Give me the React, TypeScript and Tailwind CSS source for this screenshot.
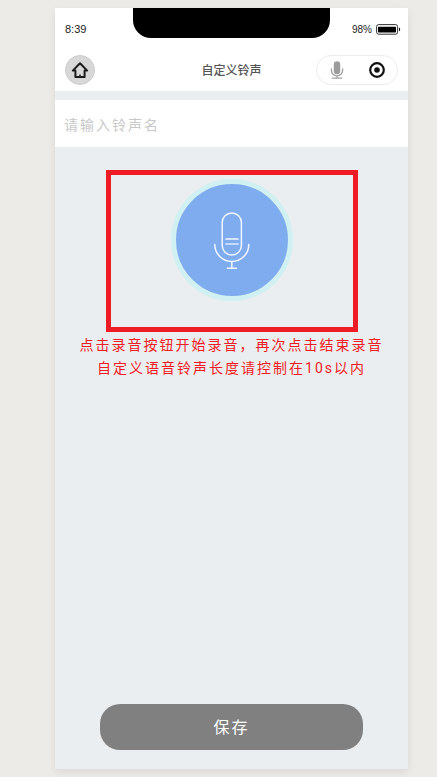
import { useState } from "react";

function HomeIcon() {
  return (
    <svg viewBox="0 0 18 18" className="size-[18px]" fill="none" stroke="#1c1c1c" strokeWidth="2" strokeLinejoin="round" strokeLinecap="round" aria-hidden="true">
      <path d="M9 2.2 L1.8 9.6 H4.4 V16 H13.6 V9.6 H16.2 Z" />
      <path d="M9 14 V15.5" strokeWidth="1.4" />
    </svg>
  );
}

function SmallMicIcon() {
  return (
    <svg viewBox="0 0 14 18" className="h-[18px] w-3.5" fill="none" stroke="#a0a0a0" strokeWidth="1.3" strokeLinecap="round" aria-hidden="true">
      <rect x="3.8" y="0.2" width="6.4" height="13" rx="3" fill="#9c9c9c" stroke="none" />
      <path d="M1.4 8 V9.4 A5.6 5.4 0 0 0 12.6 9.4 V8 M7 14.8 V17 M2.4 17.2 H11.6" />
    </svg>
  );
}

function TargetIcon() {
  return (
    <svg viewBox="0 0 16 16" className="size-4" aria-hidden="true">
      <circle cx="8" cy="8" r="6.8" fill="none" stroke="#111" strokeWidth="2.2" />
      <circle cx="8" cy="8" r="2.8" fill="#111" />
    </svg>
  );
}

function BatteryIcon() {
  return (
    <svg viewBox="0 0 25 11" className="h-[11px] w-[25px]" aria-hidden="true">
      <rect x="0.6" y="0.6" width="21" height="9.6" rx="2" fill="#fff" stroke="#333" strokeWidth="1" />
      <rect x="2" y="2.8" width="18" height="5.6" rx="0.6" fill="#000" />
      <path d="M23 3.6 C24.6 4 24.6 6.8 23 7.2 Z" fill="#000" />
    </svg>
  );
}

function RecordMicIcon() {
  return (
    <svg viewBox="0 0 36 58" className="h-[58px] w-9" fill="none" stroke="#f1f7ff" strokeWidth="1.5" strokeLinecap="round" aria-hidden="true">
      <rect x="8.2" y="2" width="19.2" height="42" rx="9.6" />
      <path d="M12 28 H24" />
      <path d="M12 33 H24" stroke="#c6dbf8" strokeWidth="1.8" />
      <path d="M0.8 33.4 A17 17 0 0 0 34.8 33.4 M17.8 50.4 V57.2 M13.4 57.2 H22.4" />
    </svg>
  );
}

export default function App() {
  const [name, setName] = useState("");
  const [recording, setRecording] = useState(false);

  return (
    <div className="flex min-h-screen bg-[#ecebe7] py-2 pr-[29px] pl-[55px] font-['Liberation_Sans','Noto_Sans_CJK_SC',sans-serif]">
      <main className="flex flex-1 flex-col bg-[#eaeef1] shadow-[0_3px_8px_rgba(0,0,0,0.08)]">
        <header className="bg-white">
          <div className="grid grid-cols-[1fr_197px_1fr]">
            <time className="pt-[13px] pl-2.5 text-[11px] leading-4 text-[#222]">8:39</time>
            <div className="h-[30px] rounded-b-[18px] bg-black" />
            <div className="flex items-center justify-end gap-1 pt-[13px] pr-[7px] text-[10px] leading-4 text-[#222]">
              <span>98%</span>
              <BatteryIcon />
            </div>
          </div>
          <div className="mt-[17px] grid grid-cols-[1fr_auto_1fr] items-center px-2.5 pb-1.5">
            <button type="button" aria-label="首页" className="grid size-[30px] place-items-center rounded-full border border-[#ccc] bg-[#d8d8d8]">
              <HomeIcon />
            </button>
            <h1 className="pt-0.5 text-xs font-medium text-[#555]">自定义铃声</h1>
            <div className="flex h-[30px] w-[82px] items-center justify-around justify-self-end rounded-full border border-[#ececec]">
              <button type="button" aria-label="语音">
                <SmallMicIcon />
              </button>
              <button type="button" aria-label="关闭">
                <TargetIcon />
              </button>
            </div>
          </div>
        </header>

        <input
          type="text"
          aria-label="铃声名"
          placeholder="请输入铃声名"
          value={name}
          onChange={(e) => setName(e.target.value)}
          className="mt-[9px] h-[47px] w-full bg-white px-[9px] pt-0.5 text-sm tracking-[2px] text-[#333] outline-none placeholder:text-[#c8c8c8]"
        />

        <section className="flex flex-col items-center">
          <div className="mt-[23px] flex h-[162px] w-[252px] justify-center border-5 border-[#ee1c24] pt-1">
            <button
              type="button"
              aria-label="录音"
              aria-pressed={recording}
              onClick={() => setRecording(!recording)}
              className="grid size-[122px] place-items-center rounded-full border-5 border-[#d0f0f2] bg-[#7eacef]"
            >
              <RecordMicIcon />
            </button>
          </div>
          <p className="mt-0.5 text-center font-['Roboto','Noto_Sans_CJK_SC',sans-serif] text-sm leading-[23px] tracking-[2px] text-[#ee1c24]">
            点击录音按钮开始录音，再次点击结束录音
            <br />
            自定义语音铃声长度请控制在10s以内
          </p>
        </section>

        <div className="mt-auto px-[45px] pb-[19px]">
          <button type="button" className="h-[46px] w-full rounded-[20px] bg-[#808080] pt-0.5 text-base tracking-[2px] text-white">
            保存
          </button>
        </div>
      </main>
    </div>
  );
}
